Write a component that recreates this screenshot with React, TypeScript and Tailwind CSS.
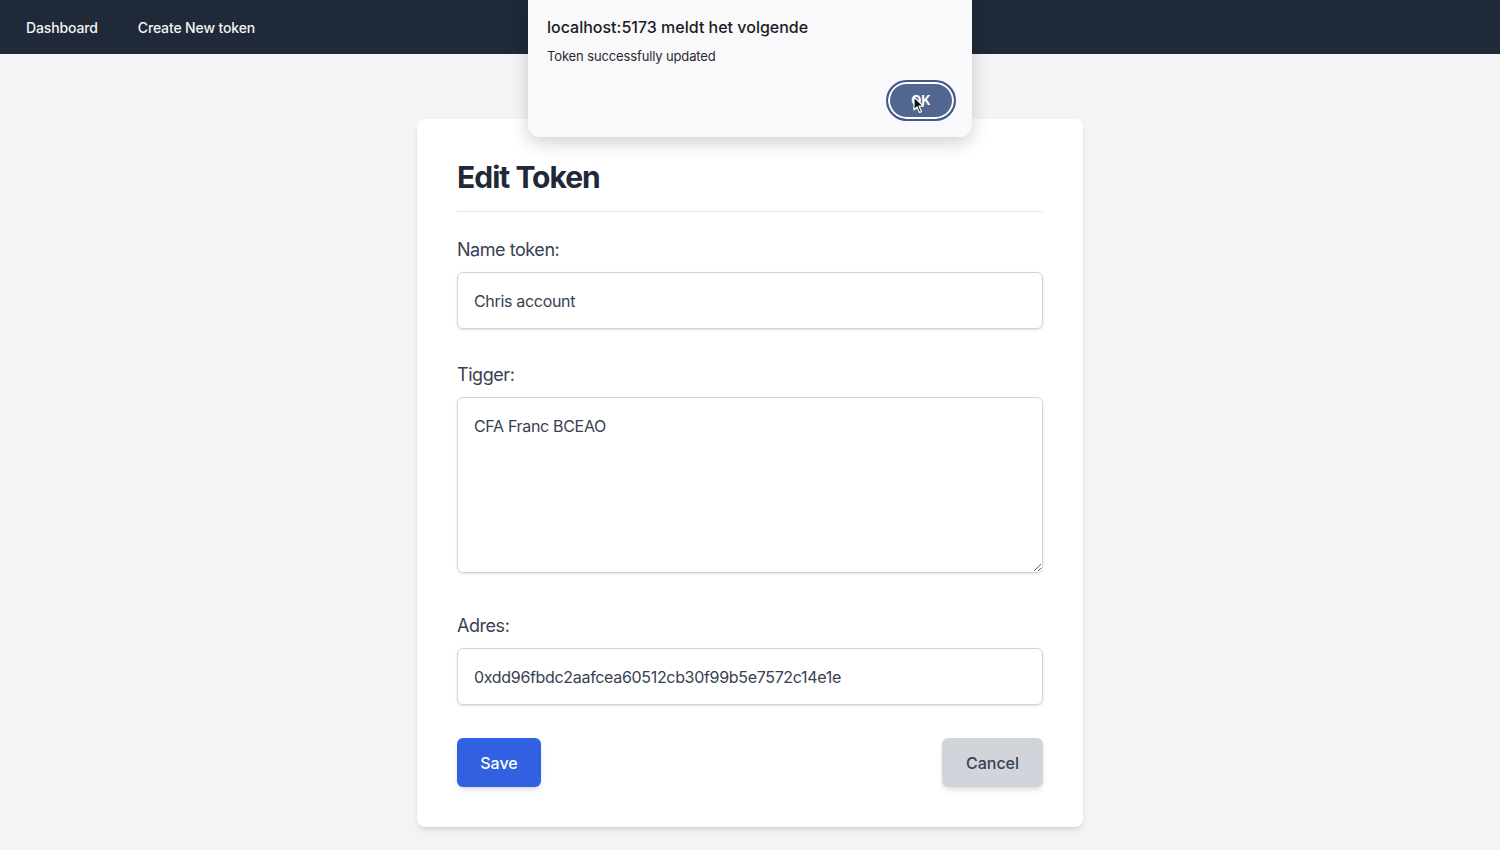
import React from "react";

export default function App() {
  return (
    <div className="relative min-h-screen w-full bg-[#f3f4f6] font-['Inter',sans-serif] text-[#1f2937]">
      <nav className="flex h-[54px] items-center gap-10 bg-[#1f2937] px-[26px] text-[14px] font-medium tracking-[-0.01em] text-[#f3f4f6]">
        <span>Dashboard</span>
        <span>Create New token</span>
      </nav>

      <main className="flex justify-center pt-[65px]">
        <div className="w-[666px] rounded-lg bg-white p-10 shadow-md">
          <h1 className="border-b border-[#e5e7eb] pb-4 text-[30px] font-bold leading-9 tracking-[-0.033em] text-[#1f2937]">Edit Token</h1>

          <div className="mt-6 flex flex-col">
            <label className="text-[18px] leading-7 tracking-[-0.025em] text-[#374151]">Name token:</label>
            <input
              className="mt-2 h-[57px] w-full rounded-md border border-[#d1d5db] px-4 text-[16px] tracking-[-0.02em] text-[#374151] shadow-sm outline-none"
              defaultValue="Chris account"
            />
          </div>

          <div className="mt-8 flex flex-col">
            <label className="text-[18px] leading-7 tracking-[-0.025em] text-[#374151]">Tigger:</label>
            <textarea
              className="mt-2 block h-[176px] w-full rounded-md border border-[#d1d5db] px-4 py-[16px] text-[16px] leading-6 tracking-[-0.02em] text-[#374151] shadow-sm outline-none"
              defaultValue="CFA Franc BCEAO"
            />
          </div>

          <div className="mt-[39px] flex flex-col">
            <label className="text-[18px] leading-7 tracking-[-0.025em] text-[#374151]">Adres:</label>
            <input
              className="mt-2 h-[57px] w-full rounded-md border border-[#d1d5db] px-4 text-[16px] tracking-[-0.02em] text-[#374151] shadow-sm outline-none"
              defaultValue="0xdd96fbdc2aafcea60512cb30f99b5e7572c14e1e"
            />
          </div>

          <div className="mt-[33px] flex items-center justify-between">
            <button className="h-[49px] w-[84px] rounded-md bg-[#3161e0] text-[16px] font-medium text-white shadow-md">Save</button>
            <button className="h-[49px] w-[101px] rounded-md bg-[#d1d5db] text-[16px] font-medium text-[#374151] shadow-md">Cancel</button>
          </div>
        </div>
      </main>

      <div className="absolute left-[528px] top-0 h-[137px] w-[444px] rounded-b-xl bg-[#f9f8fb] px-[19px] shadow-[0_6px_18px_rgba(0,0,0,0.18)]">
        <div className="pt-[17px] text-[16px] font-medium leading-5 text-[#1c1c1e]">localhost:5173 meldt het volgende</div>
        <div className="mt-[11px] text-[13px] leading-4 tracking-[-0.01em] text-[#2a2a2c]">Token successfully updated</div>
        <div className="absolute right-[16px] top-[80px]">
          <button className="flex h-[41px] w-[70px] items-center justify-center rounded-full border-2 border-[#44598a] bg-[#52678f] text-[13px] font-bold text-white ring-2 ring-inset ring-white">
            OK
          </button>
        </div>
        <svg className="absolute left-[385px] top-[96px]" width="12" height="18" viewBox="0 0 12 18">
          <path d="M1 1 L1 14 L4 11 L6.5 16.5 L8.5 15.6 L6 10.2 L10.5 10.2 Z" fill="#111" stroke="#fff" strokeWidth="1.2" strokeLinejoin="round" />
        </svg>
      </div>
    </div>
  );
}
